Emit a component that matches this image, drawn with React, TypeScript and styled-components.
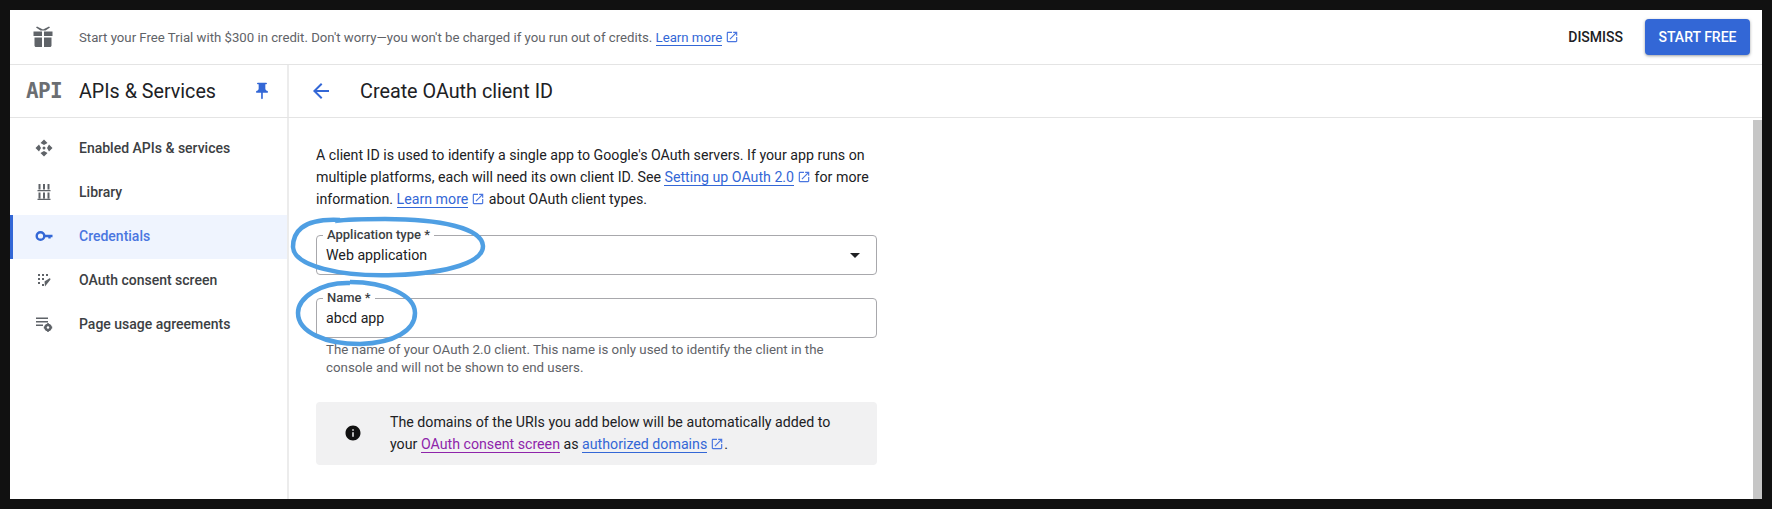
import React from 'react';
import styled, { createGlobalStyle } from 'styled-components';

const GlobalStyle = createGlobalStyle`
html, body {
    margin: 0;
    padding: 0;
    background: #111111;
}
body {
    font-family: Roboto, "Liberation Sans", sans-serif;
    color: #202124;
}
`;

const Frame = styled.div`
position: relative;
width: 1752px;
height: 489px;
margin: 10px;
background: #ffffff;
display: flex;
flex-direction: column;
overflow: hidden;
`;

const Banner = styled.div`
height: 54px;
flex: none;
display: flex;
align-items: center;
padding: 0 12px 0 21px;
border-bottom: 1px solid #e4e4e4;
`;

const BannerText = styled.div`
margin-left: 24px;
flex: 1;
font-size: 13.2px;
color: #5f6368;
`;

const DismissButton = styled.button`
border: 0;
background: none;
padding: 0;
margin-right: 22px;
font: 500 14px Roboto, sans-serif;
color: #202124;
`;

const StartButton = styled.button`
width: 105px;
height: 36px;
border: 0;
border-radius: 4px;
background: #3367d6;
color: #ffffff;
font: 500 14px Roboto, sans-serif;
box-shadow: 0 1px 3px rgba(60, 64, 67, 0.5);
`;

const HeaderRow = styled.div`
height: 52px;
flex: none;
display: flex;
border-bottom: 1px solid #e4e4e4;
`;

const SideHead = styled.div`
width: 279px;
flex: none;
display: flex;
align-items: center;
padding-left: 16px;
box-sizing: border-box;
border-right: 2px solid #ececec;
`;

const ApiLogo = styled.span`
width: 53px;
flex: none;
font: 700 21px "DejaVu Sans Mono", monospace;
letter-spacing: -0.6px;
color: #6b6e72;
`;

const SideTitle = styled.span`
flex: none;
width: 173px;
font-size: 19.7px;
color: #202124;
`;

const PageHead = styled.div`
flex: 1;
display: flex;
align-items: center;
padding-left: 20px;
`;

const PageTitle = styled.h1`
margin: 0 0 0 27px;
font-size: 19.8px;
font-weight: 400;
color: #202124;
`;

const Body = styled.div`
flex: 1;
display: flex;
min-height: 0;
`;

const Sidebar = styled.nav`
width: 279px;
flex: none;
box-sizing: border-box;
padding-top: 9px;
border-right: 2px solid #ececec;
`;

const NavRow = styled.div<{ $active?: boolean }>`
height: 44px;
display: flex;
align-items: center;
box-sizing: border-box;
padding: 0 0 2px ${(p) => (p.$active ? '21px' : '24px')};
border-left: ${(p) => (p.$active ? '3px solid #3367d6' : '0')};
background: ${(p) => (p.$active ? '#eff4fe' : 'transparent')};
color: ${(p) => (p.$active ? '#4a76e0' : '#3c4043')};
font-size: 14px;
font-weight: 500;
`;

const NavIcon = styled.span`
width: 20px;
height: 20px;
margin-right: 25px;
display: flex;
`;

const Main = styled.main`
flex: 1;
padding: 26px 0 0 27px;
`;

const Form = styled.div`
width: 561px;
`;

const Intro = styled.p`
margin: 0 0 25px;
font-size: 14.2px;
line-height: 22px;
color: #202124;
`;

const A = styled.a<{ $visited?: boolean }>`
color: ${(p) => (p.$visited ? '#8e24aa' : '#3367d6')};
border-bottom: 1px solid ${(p) => (p.$visited ? '#8e24aa' : '#3367d6')};
text-decoration: none;
`;

const Field = styled.div`
position: relative;
height: 40px;
box-sizing: border-box;
margin-bottom: 23px;
border: 1.5px solid #a8a8ac;
border-radius: 4px;
display: flex;
align-items: center;
justify-content: space-between;
padding: 0 16px 0 9px;
font-size: 14.2px;
color: #202124;
`;

const FieldLabel = styled.label`
position: absolute;
left: 6px;
top: -8px;
padding: 0 4px;
background: #ffffff;
font-size: 13px;
font-weight: 500;
line-height: 14px;
color: #3c4043;
`;

const Arrow = styled.span`
width: 0;
height: 0;
border-left: 5px solid transparent;
border-right: 5px solid transparent;
border-top: 5px solid #202124;
`;

const Hint = styled.p`
margin: -20px 0 0;
padding: 0 30px 0 10px;
font-size: 13.3px;
line-height: 18px;
color: #5f6368;
`;

const InfoBox = styled.div`
margin-top: 25px;
height: 63px;
box-sizing: border-box;
display: flex;
align-items: center;
background: #f1f1f2;
border-radius: 4px;
padding: 0 30px 2px 28px;
font-size: 14.2px;
line-height: 22px;
color: #202124;
`;

const InfoIcon = styled.svg`
width: 18px;
height: 18px;
flex: none;
margin-right: 28px;
fill: #111111;
`;

const Scrollbar = styled.div`
width: 9px;
flex: none;
margin-top: 2px;
background: #c6c6c6;
`;

const LinkIcon = styled.svg`
width: 14px;
height: 14px;
margin-left: 3px;
vertical-align: -2px;
fill: #4a76e0;
`;

const Annotation = styled.svg`
position: absolute;
left: 0;
top: 0;
width: 1752px;
height: 489px;
pointer-events: none;
fill: none;
stroke: #4f9fe3;
stroke-width: 4.5px;
`;

const External = () => (
    <LinkIcon viewBox="0 0 24 24">
        <path d="M19 19H5V5h7V3H5c-1.11 0-2 .9-2 2v14c0 1.1.89 2 2 2h14c1.1 0 2-.9 2-2v-7h-2v7zM14 3v2h3.59l-9.83 9.83 1.41 1.41L19 6.41V10h2V3h-7z" />
    </LinkIcon>
);

const GiftIcon = () => (
    <svg width="24" height="24" viewBox="0 0 24 24" fill="#5f6368">
        <path d="M2.500 6.500h8.500v4.500H2.500zM13 6.500h8.500v4.500H13zM3.500 12.500H11V22H5c-.8 0-1.500-.7-1.500-1.500zM13 12.500h7.500v8c0 .8-.7 1.500-1.500 1.500h-6z" />
        <path d="M5 2.500 6 1.500 12 4.500 18 1.500 19 2.500 14.500 5.500H9.500z" />
    </svg>
);

const PinIcon = () => (
    <svg width="20" height="20" viewBox="0 0 24 24" fill="#3367d6">
        <path d="M16 9V4h1c.55 0 1-.45 1-1s-.45-1-1-1H7c-.55 0-1 .45-1 1s.45 1 1 1h1v5c0 1.660-1.340 3-3 3v2h5.970v7l1 1 1-1v-7H19v-2c-1.660 0-3-1.340-3-3z" />
    </svg>
);

const BackIcon = () => (
    <svg width="24" height="24" viewBox="0 0 24 24" fill="#3367d6">
        <path d="M20 11H7.830l5.590-5.590L12 4l-8 8 8 8 1.410-1.410L7.830 13H20v-2z" />
    </svg>
);

const ApisIcon = () => (
    <svg width="20" height="20" viewBox="0 0 20 20" fill="#5f6368">
        <path d="M10 1.500 13.500 5 10 7 6.500 5zM10 18.500 6.500 15 10 13 13.500 15zM1.500 10 5 6.500 7 10 5 13.500zM18.500 10 15 13.500 13 10 15 6.500z" />
        <circle cx="10" cy="10" r="1.500" />
    </svg>
);

const LibraryIcon = () => (
    <svg width="20" height="20" viewBox="0 0 20 20" fill="#5f6368">
        <path d="M4.500 2h2v5.500h-2zM9 2h2v5.500H9zM13.500 2h2v5.500h-2zM3.500 8h13v1.300h-13zM4.500 10.500h2v6h-2zM9 10.500h2v6H9zM13.500 10.500h2v6h-2zM3.500 16.700h13V18h-13z" />
    </svg>
);

const KeyIcon = () => (
    <svg width="20" height="20" viewBox="0 0 20 20" fill="none" stroke="#3367d6" strokeWidth="2.400">
        <circle cx="6.500" cy="10" r="3.800" />
        <path d="M10 10h8.500M15.500 10v2.500" />
    </svg>
);

const ConsentIcon = () => (
    <svg width="20" height="20" viewBox="0 0 20 20" fill="#5f6368">
        <rect x="4" y="4" width="2" height="2" />
        <rect x="8" y="4" width="2" height="2" />
        <rect x="12" y="4" width="2" height="2" />
        <rect x="4" y="8" width="2" height="2" />
        <rect x="8" y="8" width="2" height="2" />
        <rect x="4" y="12" width="2" height="2" />
        <rect x="8" y="14" width="2" height="2" />
        <path d="M10.500 11.500 12 10.500 16 8 16.500 9.500 11 16.500z" />
    </svg>
);

const UsageIcon = () => (
    <svg width="20" height="20" viewBox="0 0 20 20" fill="#5f6368">
        <path d="M2 3.500h12V5H2zM2 7h12v1.500H2zM2 10.500h7V12H2z" />
        <circle cx="14" cy="13.500" r="2.500" fill="none" stroke="#5f6368" strokeWidth="2.400" />
        <path d="M13 9.300h2v1.500h-2zM13 16.200h2v1.500h-2zM9.800 12.500h1.500v2H9.800zM16.700 12.500h1.500v2h-1.500z" />
    </svg>
);

const navItems = [
    { label: 'Enabled APIs & services', icon: <ApisIcon /> },
    { label: 'Library', icon: <LibraryIcon /> },
    { label: 'Credentials', icon: <KeyIcon />, active: true },
    { label: 'OAuth consent screen', icon: <ConsentIcon /> },
    { label: 'Page usage agreements', icon: <UsageIcon /> },
];

export default function App() {
    return (
        <Frame>
            <GlobalStyle />
            <Banner>
                <GiftIcon />
                <BannerText>
                    Start your Free Trial with $300 in credit. Don't worry—you won't be charged if you run out of credits.{' '}
                    <A>Learn more</A>
                    <External />
                </BannerText>
                <DismissButton>DISMISS</DismissButton>
                <StartButton>START FREE</StartButton>
            </Banner>
            <HeaderRow>
                <SideHead>
                    <ApiLogo>API</ApiLogo>
                    <SideTitle>APIs &amp; Services</SideTitle>
                    <PinIcon />
                </SideHead>
                <PageHead>
                    <BackIcon />
                    <PageTitle>Create OAuth client ID</PageTitle>
                </PageHead>
            </HeaderRow>
            <Body>
                <Sidebar>
                    {navItems.map((item) => (
                        <NavRow key={item.label} $active={item.active}>
                            <NavIcon>{item.icon}</NavIcon>
                            {item.label}
                        </NavRow>
                    ))}
                </Sidebar>
                <Main>
                    <Form>
                        <Intro>
                            A client ID is used to identify a single app to Google's OAuth servers. If your app runs on
                            multiple platforms, each will need its own client ID. See <A>Setting up OAuth 2.0</A>
                            <External /> for more information. <A>Learn more</A>
                            <External /> about OAuth client types.
                        </Intro>
                        <Field>
                            <FieldLabel>Application type *</FieldLabel>
                            Web application
                            <Arrow />
                        </Field>
                        <Field>
                            <FieldLabel>Name *</FieldLabel>
                            abcd app
                        </Field>
                        <Hint>
                            The name of your OAuth 2.0 client. This name is only used to identify the client in the
                            console and will not be shown to end users.
                        </Hint>
                        <InfoBox>
                            <InfoIcon viewBox="0 0 24 24">
                                <path d="M12 2C6.480 2 2 6.480 2 12s4.480 10 10 10 10-4.480 10-10S17.520 2 12 2zm1 15h-2v-6h2v6zm0-8h-2V7h2v2z" />
                            </InfoIcon>
                            <div>
                                The domains of the URIs you add below will be automatically added to your{' '}
                                <A $visited>OAuth consent screen</A> as <A>authorized domains</A>
                                <External />.
                            </div>
                        </InfoBox>
                    </Form>
                </Main>
                <Scrollbar />
            </Body>
            <Annotation viewBox="0 0 1752 489">
                <path d="M330 210C290 208 283 224 283 237C284 256 330 267 385 265C440 263 473 252 473 236C472 218 430 209 375 209C355 209 340 209 325 211" />
                <path d="M340 273C310 272 288 288 288 303C288 322 315 334 350 334C385 333 405 320 405 303C405 285 375 272 340 272" />
            </Annotation>
        </Frame>
    );
}
